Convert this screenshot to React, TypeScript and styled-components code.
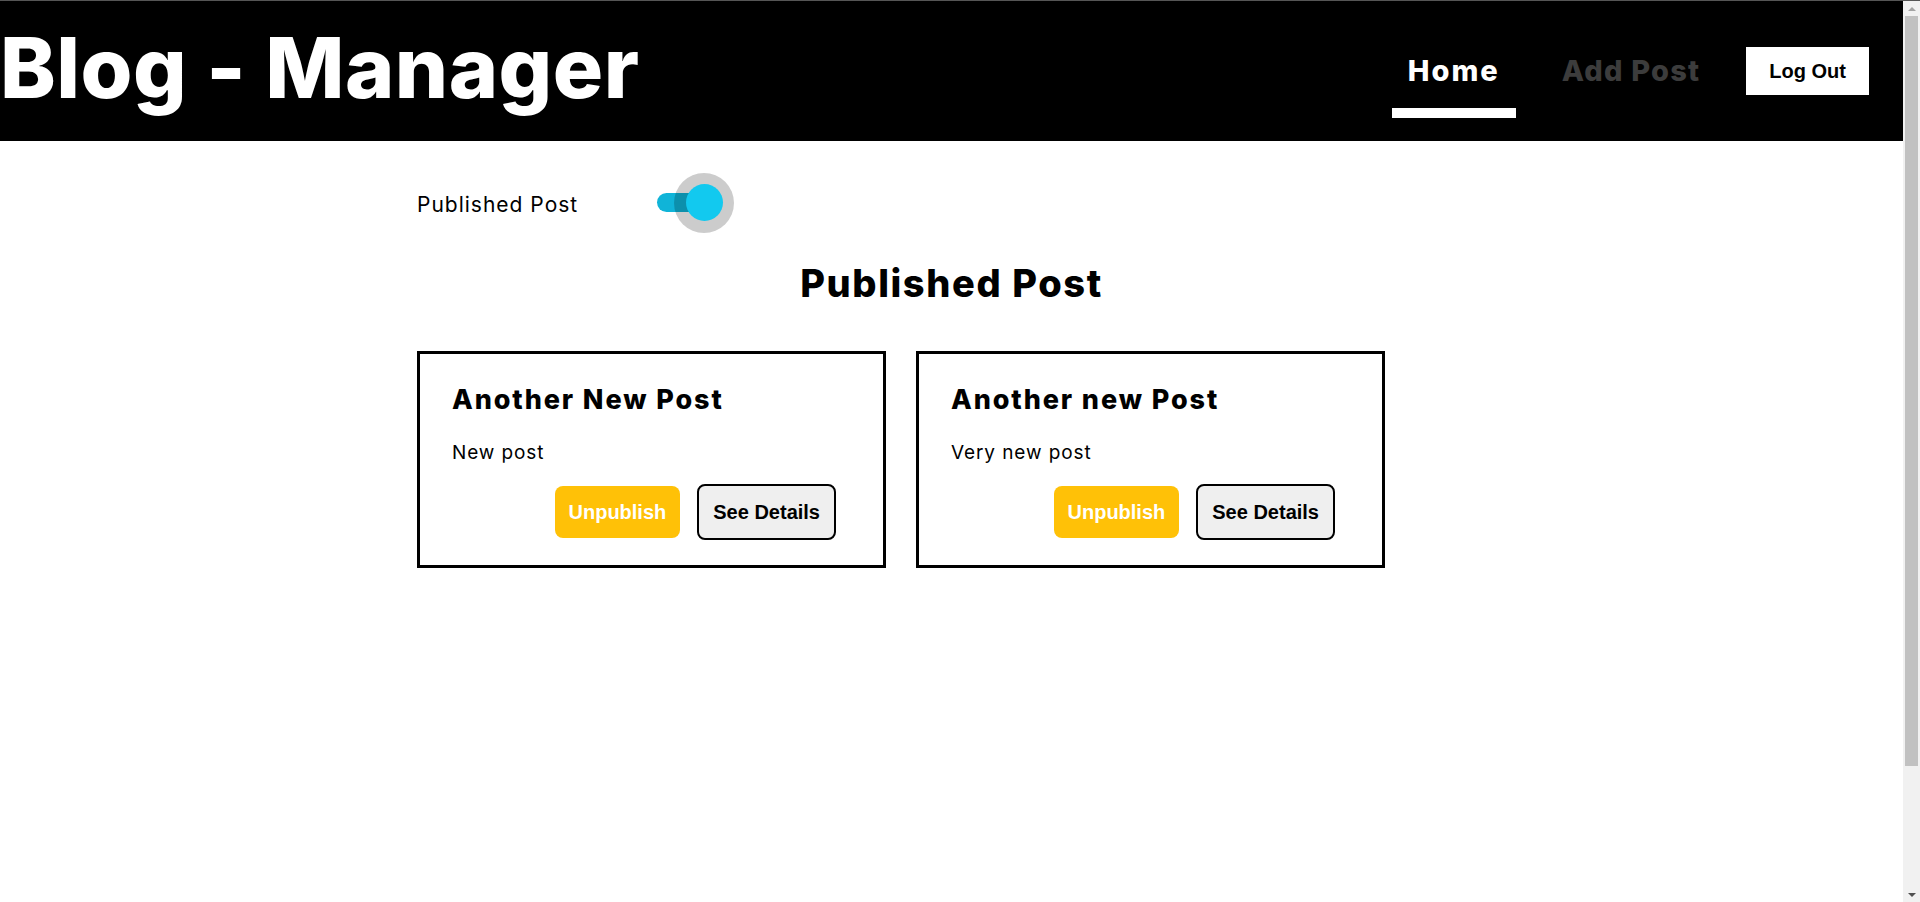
import React, { useState } from 'react';
import styled, { createGlobalStyle } from 'styled-components';

const GlobalStyle = createGlobalStyle`
  html, body {
    overflow: hidden;
  }
  body {
    margin: 0;
    font-family: 'Inter', 'Noto Sans', sans-serif;
    background: #fff;
    color: #000;
  }
`;

const Page = styled.div`
  display: flex;
  height: 100vh;
  box-sizing: border-box;
  border-top: 1px solid #555;
`;

const Content = styled.div`
  flex: 1;
  min-width: 0;
`;

/* browser scrollbar as it shows in the screenshot */
const ScrollTrack = styled.aside`
  width: 17px;
  flex-shrink: 0;
  background: #f1f1f1;
  display: flex;
  flex-direction: column;
  align-items: center;
`;

const ScrollArrow = styled.span<{ $dir: 'up' | 'down' }>`
  height: 15px;
  width: 17px;
  display: flex;
  align-items: center;
  justify-content: center;

  &::before {
    content: '';
    width: 0;
    height: 0;
    border-left: 4px solid transparent;
    border-right: 4px solid transparent;
    ${({ $dir }) =>
      $dir === 'up' ? 'border-bottom: 4px solid #a3a3a3;' : 'border-top: 4px solid #505050;'}
  }
`;

const ScrollThumb = styled.span`
  width: 13px;
  height: 750px;
  background: #c1c1c1;
`;

const ScrollSpacer = styled.span`
  flex: 1;
`;

const Header = styled.header`
  height: 140px;
  background-color: #000;
  display: flex;
  align-items: center;
  justify-content: space-between;
  padding-right: 34px;
`;

const Logo = styled.h1`
  margin: 0;
  color: #fff;
  font-size: 84px;
  font-weight: 800;
  letter-spacing: 0.5px;
  line-height: 1;
  padding-bottom: 6px;
`;

const Nav = styled.nav`
  display: flex;
  align-items: center;
  gap: 30px;
`;

const NavItem = styled.a<{ $active?: boolean }>`
  display: block;
  padding: 26px 16px 17px;
  line-height: 40px;
  font-size: 29px;
  font-weight: 800;
  letter-spacing: ${({ $active }) => ($active ? '2px' : '1.2px')};
  text-decoration: none;
  cursor: pointer;
  color: ${({ $active }) => ($active ? '#fff' : '#3c3c3c')};
  border-bottom: 10px solid ${({ $active }) => ($active ? '#fff' : 'transparent')};
`;

const LogOutButton = styled.button`
  background: #fff;
  color: #000;
  border: none;
  padding: 12px 23px;
  font-family: 'Liberation Sans', Arial, sans-serif;
  font-weight: 700;
  font-size: 20px;
  line-height: 24px;
  cursor: pointer;
`;

const Main = styled.main`
  width: 1069px;
  margin: 0 auto;
  padding-top: 31px;
`;

const ToggleRow = styled.div`
  display: flex;
  align-items: center;
  height: 62px;
`;

const ToggleLabel = styled.span`
  width: 240px;
  font-size: 21px;
  letter-spacing: 1px;
  font-weight: 400;
  padding-top: 3px;
`;

const SwitchBox = styled.div`
  position: relative;
  width: 80px;
  height: 62px;
  cursor: pointer;
`;

const Track = styled.span<{ $on: boolean }>`
  position: absolute;
  left: 0;
  top: 21px;
  width: 62px;
  height: 19px;
  border-radius: 10px;
  background: ${({ $on }) => ($on ? '#10b4d8' : '#bdbdbd')};
`;

const Halo = styled.span<{ $on: boolean }>`
  position: absolute;
  top: 1px;
  left: ${({ $on }) => ($on ? '17px' : '-13px')};
  width: 60px;
  height: 60px;
  border-radius: 50%;
  background: rgba(0, 0, 0, 0.2);
`;

const Thumb = styled.span<{ $on: boolean }>`
  position: absolute;
  top: 12px;
  left: ${({ $on }) => ($on ? '29px' : '-1px')};
  width: 37px;
  height: 37px;
  border-radius: 50%;
  background: ${({ $on }) => ($on ? '#12c9ef' : '#fafafa')};
`;

const Heading = styled.h2`
  margin: 26px 0 0;
  text-align: center;
  font-size: 38px;
  line-height: 46px;
  font-weight: 800;
  letter-spacing: 1.6px;
`;

const CardGrid = styled.div`
  display: flex;
  flex-wrap: wrap;
  gap: 30px;
  margin-top: 45px;
`;

const Card = styled.article`
  box-sizing: border-box;
  width: 469px;
  border: 3px solid #000;
  padding: 28px 32px 25px;
`;

const CardTitle = styled.h3`
  margin: 0;
  font-size: 27px;
  line-height: 36px;
  font-weight: 800;
  letter-spacing: 1.9px;
`;

const CardText = styled.p`
  margin: 21px 0 0;
  font-size: 19px;
  line-height: 28px;
  letter-spacing: 0.9px;
`;

const Actions = styled.div`
  display: flex;
  justify-content: flex-end;
  align-items: center;
  gap: 17px;
  margin: 17px 15px 0 0;
`;

const ActionButton = styled.button<{ $variant: 'warning' | 'plain' }>`
  font-family: 'Liberation Sans', Arial, sans-serif;
  font-weight: 700;
  font-size: 20px;
  line-height: 24px;
  padding: 14px;
  border-radius: 8px;
  cursor: pointer;
  background: ${({ $variant }) => ($variant === 'warning' ? '#ffc107' : '#efefef')};
  color: ${({ $variant }) => ($variant === 'warning' ? '#fff' : '#000')};
  border: ${({ $variant }) => ($variant === 'warning' ? 'none' : '2px solid #000')};
`;

const posts = [
  { id: 1, title: 'Another New Post', body: 'New post' },
  { id: 2, title: 'Another new Post', body: 'Very new post' },
];

export default function App() {
  const [published, setPublished] = useState(true);

  return (
    <Page>
      <GlobalStyle />
      <Content>
        <Header>
          <Logo>Blog - Manager</Logo>
          <Nav>
            <NavItem $active>Home</NavItem>
            <NavItem>Add Post</NavItem>
            <LogOutButton>Log Out</LogOutButton>
          </Nav>
        </Header>

        <Main>
          <ToggleRow>
            <ToggleLabel>Published Post</ToggleLabel>
            <SwitchBox onClick={() => setPublished(!published)}>
              <Track $on={published} />
              <Halo $on={published} />
              <Thumb $on={published} />
            </SwitchBox>
          </ToggleRow>

          <Heading>{published ? 'Published Post' : 'Unpublished Post'}</Heading>

          <CardGrid>
            {posts.map((post) => (
              <Card key={post.id}>
                <CardTitle>{post.title}</CardTitle>
                <CardText>{post.body}</CardText>
                <Actions>
                  <ActionButton $variant="warning">{published ? 'Unpublish' : 'Publish'}</ActionButton>
                  <ActionButton $variant="plain">See Details</ActionButton>
                </Actions>
              </Card>
            ))}
          </CardGrid>
        </Main>
      </Content>

      <ScrollTrack>
        <ScrollArrow $dir="up" />
        <ScrollThumb />
        <ScrollSpacer />
        <ScrollArrow $dir="down" />
      </ScrollTrack>
    </Page>
  );
}
